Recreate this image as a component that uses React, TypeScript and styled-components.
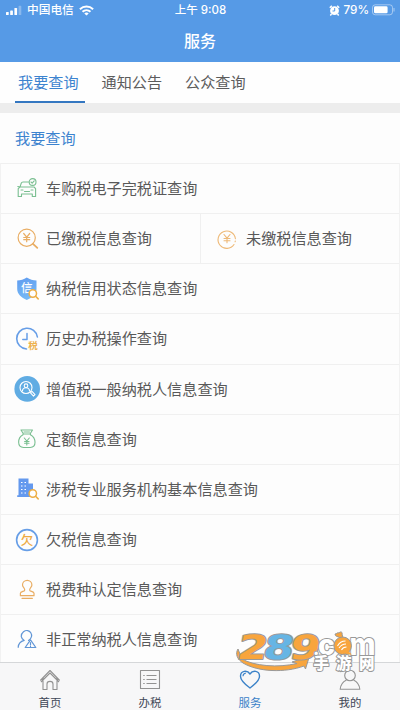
import React from 'react';
import styled, { createGlobalStyle } from 'styled-components';

const cjk = '"Noto Sans CJK SC", sans-serif';

const GlobalStyle = createGlobalStyle`
  * { box-sizing: border-box; }
  body { margin: 0; background: #fdfdfd; font-family: "Liberation Sans", ${cjk}; }
  svg { display: block; overflow: visible; }
`;

const Screen = styled.main`
  position: relative;
  width: 400px;
  height: 710px;
  display: flex;
  flex-direction: column;
  overflow: hidden;
  background: #fdfdfd;
`;
const Header = styled.header`
  height: 62px;
  flex: none;
  background: #569ae6;
  color: #fff;
`;
const StatusBar = styled.div`
  height: 20px;
  padding: 0 5px 0 6px;
  display: grid;
  grid-template-columns: 1fr auto 1fr;
  align-items: center;
  font: 500 11.7px/20px Inter, ${cjk};
  white-space: nowrap;
`;
const StatusGroup = styled.div<{ $end?: boolean }>`
  display: flex;
  align-items: center;
  gap: ${p => (p.$end ? 3 : 5)}px;
  justify-content: ${p => (p.$end ? 'flex-end' : 'flex-start')};
`;
const Clock = styled.span`
  font-size: 11.5px;
`;
const Title = styled.h1`
  margin: 0;
  height: 42px;
  text-align: center;
  font: 500 16px/41px ${cjk};
`;
const Tabs = styled.nav`
  flex: none;
  height: 41px;
  display: flex;
  gap: 14px;
  padding-left: 15px;
  background: #fefefe;
`;
const Tab = styled.a<{ $active?: boolean }>`
  width: 69.5px;
  height: 41px;
  padding-left: 3px;
  white-space: nowrap;
  font: 400 15.15px/39px ${cjk};
  color: ${p => (p.$active ? '#3c83cf' : '#5c5c5c')};
  border-bottom: 2px solid ${p => (p.$active ? '#3477c1' : 'transparent')};
`;
const Band = styled.div`
  flex: none;
  height: 10px;
  background: #ededed;
`;
const SectionTitle = styled.h2`
  flex: none;
  margin: 0;
  height: 50px;
  padding-left: 15px;
  font: 400 15.15px/48px ${cjk};
  color: #3c83cf;
`;
const List = styled.section`
  flex: 1;
  min-height: 0;
  overflow: hidden;
  border-left: 1px solid #f2f2f2;
  border-right: 1px solid #f2f2f2;
`;
const Row = styled.div`
  display: flex;
  height: 50.15px;
  border-top: 1px solid #f0f0f0;
`;
const Entry = styled.div`
  flex: 1;
  display: flex;
  align-items: center;
  padding-left: 13px;
  gap: 6px;
  color: #595959;
  & + & { flex: 0 0 199px; border-left: 1px solid #f0f0f0; }
`;
const Label = styled.span`
  padding-bottom: 3px;
  font: 400 15.15px/24px ${cjk};
  white-space: nowrap;
`;
const IconSlot = styled.span`
  width: 26px;
  height: 26px;
  flex: none;
`;
const BottomNav = styled.nav`
  flex: none;
  height: 48px;
  display: grid;
  grid-template-columns: repeat(4, 1fr);
  border-top: 1px solid #d5d7d9;
  background: #f7f7f8;
`;
const NavItem = styled.a<{ $active?: boolean }>`
  display: flex;
  flex-direction: column;
  align-items: center;
  padding-top: 6px;
  gap: 3px;
  font: 400 11.4px/17px ${cjk};
  color: ${p => (p.$active ? '#3b82c8' : '#3e4656')};
`;
const Watermark = styled.div`
  position: absolute;
  left: 234px;
  top: 630px;
  pointer-events: none;
`;

const green = '#7abf91', orange = '#e9ad63', blue = '#679ee7';

const Icon = ({ children }: { children: React.ReactNode }) => (
  <IconSlot>
    <svg width="26" height="26" viewBox="0 0 26 26" fill="none" strokeWidth="1.2" strokeLinecap="round" strokeLinejoin="round">
      {children}
    </svg>
  </IconSlot>
);
const yen = (x: number, y: number) => (
  <path d={`M${x - 3} ${y - 4}l3 3.7 3-3.7M${x} ${y - 0.3}v4.5M${x - 3} ${y}h6M${x - 3} ${y + 2.2}h6`} />
);
const Lens = () => (
  <g stroke="#edae45" strokeWidth="1.5">
    <circle cx="18.8" cy="17.5" r="3.7" fill="#fff" /><path d="m21.6 20.3 2.6 2.6" />
  </g>
);

const CarIcon = () => (
  <Icon><g stroke={green} strokeWidth="1.1">
    <path d="M14.5 6H9Q7.7 6 7.200 7.300L6 11 4.200 12.700V20.500H7.500V18H18.300V20.500H21.600V12.700L20 11M6 11h14M7 14h2M17 14h2M10.500 15.500h5M3.800 10.500l1.500.3" />
    <circle cx="18.6" cy="6" r="3.4" /><path d="m17 6 1.200 1.200L20.200 4.900" />
  </g></Icon>
);
const PaidIcon = () => (
  <Icon><g stroke={orange}><circle cx="12.7" cy="11.7" r="8.6" />{yen(12.7, 11.5)}<path d="m19 17.8 4.300 4" strokeWidth="1.8" /></g></Icon>
);
const UnpaidIcon = () => (
  <Icon><g stroke="#eeb977" strokeWidth="1.1"><path d="M20 18.500a8.700 8.700 0 1 1 1.400-5.700M21.300 15l-.2.8" />{yen(13, 12.5)}</g></Icon>
);
const CreditIcon = () => (
  <Icon>
    <defs><linearGradient id="shield" y2="1" x2=".3"><stop stopColor="#5f9bf0" /><stop offset="1" stopColor="#76b9f5" /></linearGradient></defs>
    <path d="M12.800 1.500c3 2 6.200 2.800 9.700 3v8.500c0 5-4.200 8.500-9.700 11-5.500-2.500-9.600-6-9.600-11V4.500c3.400-.2 6.600-1 9.600-3z" fill="url(#shield)" />
    <text x="7" y="16.2" fontFamily={cjk} fontSize="11.500" fontWeight="500" fill="#fff">信</text><Lens />
  </Icon>
);
const HistoryIcon = () => (
  <Icon>
    <path d="M12.500 23A10.400 10.400 0 1 1 23.400 11" stroke={blue} strokeWidth="1.6" />
    <path d="M13 7.500v6H8.800" stroke={blue} strokeWidth="1.5" />
    <text x="14.2" y="22.800" fontFamily={cjk} fontSize="9.500" fontWeight="700" fill="#edb14e">税</text>
  </Icon>
);
const TaxpayerIcon = () => (
  <Icon>
    <circle cx="13.2" cy="12.9" r="12.8" fill="#60ace3" />
    <g stroke="#fff" strokeWidth="1.1"><circle cx="12" cy="11.5" r="6" /><circle cx="12" cy="9.7" r="1.8" /><path d="M8.500 14.800c.3-4 6.700-4 7 0M17 16.200l1-.8 3 3.300-1.500 1.400-3-3.200z" /></g>
  </Icon>
);
const PurseIcon = () => (
  <Icon><g stroke={green} strokeWidth="1.1">
    <path d="M9.500 8 7 4h11.500L16 8M9 8h7.500M9 8.700C3 12 3.200 21.500 9.500 21.500h6.700c6.500 0 6.300-9.500.2-12.800M10 6h5.500" />
    <path d="m10.300 12 2.500 3 2.500-3M12.800 15v4M10.600 15.500H15M10.600 17.300H15" />
  </g></Icon>
);
const AgencyIcon = () => (
  <Icon>
    <path d="M4.500 2.500h10v5H19v13.500H3.200v-1.700h1.300zM15 8h4v13h-4z" fill="#6499ee" />
    <path d="M7 6.500h1.500M10.500 6.500H12M7 10h1.500M10.500 10H12M7 13.500h1.500M10.500 13.500H12M7 17h1.500M10.500 17H12" stroke="#fff" strokeLinecap="butt" /><Lens />
  </Icon>
);
const ArrearsIcon = () => (
  <Icon>
    <circle cx="13" cy="13" r="10.4" stroke={blue} strokeWidth="1.6" />
    <text x="6.800" y="17.500" fontFamily={cjk} fontSize="12.500" fontWeight="500" fill="#edaa43">欠</text>
  </Icon>
);
const StampIcon = () => (
  <Icon><g stroke={orange}>
    <path d="M10.600 13.500c1-2-2.100-3.200-2.100-5.500a4.700 4.700 0 0 1 9.400 0c0 2.300-3.100 3.500-2.100 5.500.4 1 4.200 1 4.200 2.700v2.500H6.400v-2.500c0-1.700 3.800-1.700 4.200-2.700zM8 21.300h10.400" />
  </g></Icon>
);
const AbnormalIcon = () => (
  <Icon><g stroke="#6196d6">
    <path d="M14.500 13.400c7-4.300.8-13.200-5-8.600-3.800 3.200-2.400 6.600.7 8.600-3.600 1-5.800 3.100-6 6.900" />
    <path d="m16.500 12.800 5.300 7.700H11.200zM16.500 15.500v2.500M16.500 19.300v.1" />
  </g></Icon>
);

const rows: { label: string; Glyph: () => React.JSX.Element }[][] = [
  [{ label: '车购税电子完税证查询', Glyph: CarIcon }],
  [{ label: '已缴税信息查询', Glyph: PaidIcon }, { label: '未缴税信息查询', Glyph: UnpaidIcon }],
  [{ label: '纳税信用状态信息查询', Glyph: CreditIcon }],
  [{ label: '历史办税操作查询', Glyph: HistoryIcon }],
  [{ label: '增值税一般纳税人信息查询', Glyph: TaxpayerIcon }],
  [{ label: '定额信息查询', Glyph: PurseIcon }],
  [{ label: '涉税专业服务机构基本信息查询', Glyph: AgencyIcon }],
  [{ label: '欠税信息查询', Glyph: ArrearsIcon }],
  [{ label: '税费种认定信息查询', Glyph: StampIcon }],
  [{ label: '非正常纳税人信息查询', Glyph: AbnormalIcon }],
];

const NavSvg = ({ children, color = '#929292' }: { children: React.ReactNode; color?: string }) => (
  <svg width="22" height="22" viewBox="0 0 22 22" fill="none" stroke={color} strokeWidth="1.1" strokeLinejoin="round">{children}</svg>
);

const Signal = () => (
  <svg width="16" height="11" viewBox="0 0 16 11" fill="#fff">
    <rect y="7" width="2.7" height="3" rx=".6" /><rect x="4.2" y="5.4" width="2.7" height="4.6" rx=".6" />
    <rect x="8.4" y="3" width="2.7" height="7" rx=".6" /><rect x="12.6" y=".8" width="2.7" height="9.2" rx=".6" opacity=".3" />
  </svg>
);
const Wifi = () => (
  <svg width="15" height="11" viewBox="0 0 15 11" fill="none" stroke="#fff" strokeWidth="2">
    <path d="M.9 4.200c3.800-3.500 9.400-3.500 13.200 0M3.500 6.800c2.300-2.100 5.700-2.100 8 0" /><path d="m5.300 8.400 2.200 2.200 2.200-2.200c-1.200-1.100-3.200-1.100-4.400 0z" fill="#fff" stroke="none" />
  </svg>
);
const Alarm = () => (
  <svg width="11" height="11" viewBox="0 0 11 11">
    <circle cx="5.5" cy="5.7" r="4.4" fill="#fff" /><path d="m.8 2.700 2-1.900M10.200 2.700l-2-1.900M2.500 9 1.300 10.400M8.500 9l1.200 1.400" stroke="#fff" strokeWidth="1.5" />
    <path d="M5.700 3v3H3.500" fill="none" stroke="#569ae6" />
  </svg>
);
const Battery = () => (
  <svg width="23" height="12" viewBox="0 0 23 12">
    <rect x=".5" y=".8" width="20" height="10" rx="2.7" fill="none" stroke="#fff" strokeOpacity=".45" />
    <rect x="2" y="2.3" width="13.6" height="7" rx="1.4" fill="#fff" /><path d="M22 4v3.500" stroke="#fff" strokeOpacity=".5" />
  </svg>
);

const Logo = () => (
  <svg width="144" height="46" viewBox="0 0 144 46" strokeLinejoin="round">
    <path d="M4 19C1 24 3 29 9 33c15 9 42 10 61 3l1.500 3L75.500 26 58 32l5 1.500C44 38 20 36 8 29z" fill="#f8a53d" stroke="#999" />
    <g transform="translate(4 29) skewX(-10)" fontFamily='"DejaVu Sans", sans-serif' fontWeight="700" fontSize="33.5" stroke="#999" strokeWidth="2" paintOrder="stroke">
      <text x="-2" textLength="30" lengthAdjust="spacingAndGlyphs" fill="#f8a53d">2</text>
      <text x="50.500" textLength="30" lengthAdjust="spacingAndGlyphs" fill="#f8a53d">9</text>
      <text x="24" textLength="30" lengthAdjust="spacingAndGlyphs" fill="#66b5e4">8</text>
    </g>
    <g fontFamily="Inter, sans-serif" fontWeight="800" fill="#fff" stroke="#999" strokeWidth="2" paintOrder="stroke">
      <text x="79" y="25" fontSize="18">.</text>
      <text x="84" y="24.500" fontSize="28" textLength="17" lengthAdjust="spacingAndGlyphs">c</text>
      <text x="115.500" y="24.500" fontSize="30" textLength="26" lengthAdjust="spacingAndGlyphs">m</text>
    </g>
    <path d="M106 8c-2-2-5-1-5-4 2 0 2-2 4-1 1-2 4-1 3 1l1 4" fill="#f8a53d" stroke="#999" />
    <circle cx="108.7" cy="15.800" r="8.8" fill="#f8a53d" stroke="#999" />
    <path d="M103.500 16c2-4 5-5 8-5M105 18c2-3 4-4 7-4M107.500 20c1-2 2.500-3 5-3" fill="none" stroke="#fff" strokeWidth="1.1" />
    <path d="m113 20 5 4.500h-6" fill="#f8a53d" />
    <text x="79.500 102 125" y="38.500" fontFamily={cjk} fontWeight="900" fontSize="15.500" fill="#fff" stroke="#999" strokeWidth="2" paintOrder="stroke">手游网</text>
  </svg>
);

export default function App() {
  return (
    <Screen>
      <GlobalStyle />
      <Header>
        <StatusBar>
          <StatusGroup><Signal /><span>中国电信</span><Wifi /></StatusGroup>
          <Clock>上午 9:08</Clock>
          <StatusGroup $end><Alarm /><span>79%</span><Battery /></StatusGroup>
        </StatusBar>
        <Title>服务</Title>
      </Header>
      <Tabs><Tab $active>我要查询</Tab><Tab>通知公告</Tab><Tab>公众查询</Tab></Tabs>
      <Band />
      <SectionTitle>我要查询</SectionTitle>
      <List>
        {rows.map(row => (
          <Row key={row[0].label}>
            {row.map(({ label, Glyph }) => <Entry key={label}><Glyph /><Label>{label}</Label></Entry>)}
          </Row>
        ))}
      </List>
      <BottomNav>
        <NavItem><NavSvg><path d="m1.300 11.500 9.700-10 9.700 10M4 9v11.500h4V15c0-3.500 6-3.500 6 0v5.500h4V9M2 13l9-9 9 9" /></NavSvg>首页</NavItem>
        <NavItem><NavSvg><path d="M1.500 1.500h19v18h-19zM7.500 6.500h10M7.500 10.500h10M7.500 14.500h10M4.200 6.500h1.500M4.200 10.500h1.500M4.200 14.500h1.500" /></NavSvg>办税</NavItem>
        <NavItem $active><NavSvg color="#3b82c8"><path strokeWidth="1.4" d="M11 19C7 16 1.500 12 1.500 7.200 1.500 1.500 8.200.8 11 5c2.800-4.200 9.500-3.500 9.500 2.200C20.500 12 15 16 11 19z" /><path d="M4 7.300c0-2 1.200-3 2.800-3.200" /></NavSvg>服务</NavItem>
        <NavItem><NavSvg><circle cx="11" cy="6.5" r="5.3" /><path d="M7.500 11C3.500 13 1.500 16 1.200 20.300h19.600C20.500 16 18.500 13 14.500 11" /></NavSvg>我的</NavItem>
      </BottomNav>
      <Watermark><Logo /></Watermark>
    </Screen>
  );
}
